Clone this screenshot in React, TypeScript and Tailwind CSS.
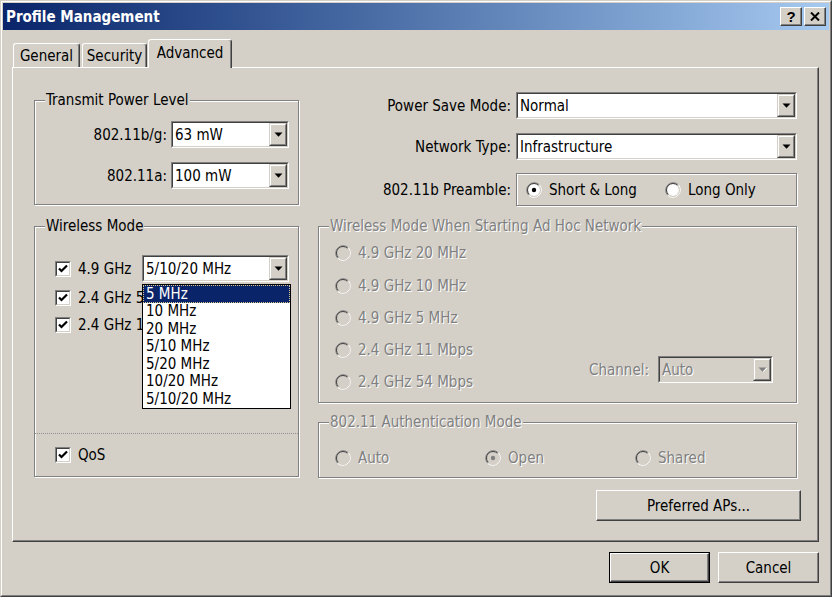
import React from "react";

const FONT = "font-['DejaVu_Sans_Condensed','DejaVu_Sans',sans-serif] [font-stretch:condensed]";
const DIS = "text-[#808080] [text-shadow:1px_1px_0_#fff]";
const ETCH = "border border-[#808080] shadow-[inset_1px_1px_0_#fff,1px_1px_0_#fff]";
const RAISED =
  "border border-t-white border-l-white border-r-[#404040] border-b-[#404040] shadow-[inset_-1px_-1px_0_#808080]";

function Check() {
  return (
    <span className="flex w-[16px] h-[16px] shrink-0 border border-t-[#808080] border-l-[#808080] border-r-white border-b-white">
      <span className="flex-1 flex items-center justify-center bg-white border border-t-[#404040] border-l-[#404040] border-r-[#d4d0c8] border-b-[#d4d0c8]">
        <svg width="12" height="12" viewBox="0 0 12 12">
          <polyline points="2,5.5 4.5,8 10,2.5" fill="none" stroke="#000" strokeWidth="2.2" />
        </svg>
      </span>
    </span>
  );
}

function Radio({ checked = false, disabled = false }: { checked?: boolean; disabled?: boolean }) {
  return (
    <svg width="16" height="16" viewBox="0 0 16 16" className="shrink-0">
      <circle cx="8" cy="8" r="6" fill={disabled ? "#d4d0c8" : "#fff"} />
      <path d="M2.7 13.3 A7.5 7.5 0 0 1 13.3 2.7" stroke="#808080" fill="none" />
      <path d="M13.3 2.7 A7.5 7.5 0 0 1 2.7 13.3" stroke="#fff" fill="none" />
      <path d="M3.4 12.6 A6.5 6.5 0 0 1 12.6 3.4" stroke="#404040" fill="none" />
      <path d="M12.6 3.4 A6.5 6.5 0 0 1 3.4 12.6" stroke="#d4d0c8" fill="none" />
      {checked && <circle cx="8" cy="8" r="2.2" fill={disabled ? "#808080" : "#000"} />}
    </svg>
  );
}

function Arrow({ disabled = false }: { disabled?: boolean }) {
  return (
    <span className="flex w-[18px] shrink-0 border border-t-[#d4d0c8] border-l-[#d4d0c8] border-r-[#404040] border-b-[#404040] bg-[#d4d0c8]">
      <span className="flex-1 flex items-center justify-center border border-t-white border-l-white border-r-[#808080] border-b-[#808080]">
        <svg width="9" height="6" viewBox="0 0 9 6">
          {disabled && <path d="M1.5 1 L9.5 1 L5.5 5 Z" fill="#fff" />}
          <path d="M0.5 0.5 L8.5 0.5 L4.5 4.8 Z" fill={disabled ? "#808080" : "#000"} />
        </svg>
      </span>
    </span>
  );
}

function Combo({ text, className, disabled = false }: { text: string; className: string; disabled?: boolean }) {
  return (
    <div
      className={`flex h-[27px] shrink-0 border border-t-[#808080] border-l-[#808080] border-r-white border-b-white ${className}`}
    >
      <div
        className={`flex-1 flex border border-t-[#404040] border-l-[#404040] border-r-[#d4d0c8] border-b-[#d4d0c8] ${
          disabled ? "bg-[#d4d0c8]" : "bg-white"
        }`}
      >
        <span className={`flex-1 flex items-center pl-[2px] whitespace-nowrap ${disabled ? DIS : ""}`}>{text}</span>
        <Arrow disabled={disabled} />
      </div>
    </div>
  );
}

function Group({
  legend,
  className,
  disabled = false,
  children,
}: {
  legend?: string;
  className: string;
  disabled?: boolean;
  children: React.ReactNode;
}) {
  return (
    <div className={`relative ${ETCH} ${className}`}>
      {legend && (
        <span
          className={`absolute left-[10px] top-[-10px] px-[1px] bg-[#d4d0c8] leading-[18px] whitespace-nowrap ${
            disabled ? DIS : ""
          }`}
        >
          {legend}
        </span>
      )}
      {children}
    </div>
  );
}

function Btn({ children, className }: { children: React.ReactNode; className: string }) {
  return <div className={`flex items-center justify-center ${RAISED} ${className}`}>{children}</div>;
}

const LIST = ["5 MHz", "10 MHz", "20 MHz", "5/10 MHz", "5/20 MHz", "10/20 MHz", "5/10/20 MHz"];

export default function App() {
  return (
    <div
      className={`w-[832px] h-[597px] overflow-hidden bg-[#d4d0c8] text-[15px] leading-[18px] text-black ${FONT} border border-t-[#d4d0c8] border-l-[#d4d0c8] border-r-[#404040] border-b-[#404040]`}
    >
      <div className="h-full flex flex-col p-[1px] border border-t-white border-l-white border-r-[#808080] border-b-[#808080]">
        {/* title bar */}
        <div className="h-[27px] shrink-0 flex items-center pl-[3px] pr-[3px] bg-gradient-to-r from-[#0a246a] to-[#a6caf0]">
          <span className="flex-1 text-white font-bold text-[15px]">Profile Management</span>
          <Btn className="w-[22px] h-[19px] bg-[#d4d0c8]">
            <span className="font-bold text-[15px] leading-none font-['Liberation_Sans',sans-serif] [font-stretch:normal]">?</span>
          </Btn>
          <Btn className="w-[22px] h-[19px] ml-[2px] bg-[#d4d0c8]">
            <svg width="10" height="9" viewBox="0 0 10 9">
              <path d="M1 0.5 L9 8.5 M9 0.5 L1 8.5" stroke="#000" strokeWidth="2" />
            </svg>
          </Btn>
        </div>

        <div className="flex-1 flex flex-col pl-[9px] pr-[10px] pt-[9px]">
          {/* tabs */}
          <div className="h-[28px] flex items-end pl-[1px]">
            <div className="h-[24px] w-[67px] flex items-center justify-center rounded-t-[3px] border-t border-l border-white border-r border-r-[#404040] shadow-[inset_-1px_0_0_#808080]">
              General
            </div>
            <div className="h-[24px] w-[65px] ml-[2px] flex items-center justify-center rounded-t-[3px] border-t border-l border-white border-r border-r-[#404040] shadow-[inset_-1px_0_0_#808080]">
              Security
            </div>
            <div className="relative z-10 h-[29px] w-[84px] ml-[1px] -mb-[1px] pb-[3px] flex items-center justify-center bg-[#d4d0c8] rounded-t-[3px] border-t border-l border-white border-r border-r-[#404040] shadow-[inset_-1px_0_0_#808080]">
              Advanced
            </div>
          </div>

          {/* panel */}
          <div className="h-[475px] flex pl-[21px] gap-[19px] border border-t-white border-l-white border-r-[#404040] border-b-[#404040] shadow-[inset_-1px_-1px_0_#808080]">
            {/* left column */}
            <div className="w-[265px] flex flex-col pt-[32px]">
              <Group legend="Transmit Power Level" className="h-[105px] flex flex-col gap-[14px] pt-[20px] pr-[9px]">
                <div className="flex items-center justify-end gap-[4px]">
                  <span>802.11b/g:</span>
                  <Combo text="63 mW" className="w-[118px]" />
                </div>
                <div className="flex items-center justify-end gap-[4px]">
                  <span>802.11a:</span>
                  <Combo text="100 mW" className="w-[118px]" />
                </div>
              </Group>

              <Group legend="Wireless Mode" className="mt-[21px] h-[251px] flex flex-col">
                <div className="pl-[20px] pt-[28px] flex flex-col">
                  <div className="h-[27px] flex items-center">
                    <div className="w-[87px] flex items-center gap-[7px]">
                      <Check />
                      <span className="whitespace-nowrap">4.9 GHz</span>
                    </div>
                    <div className="relative">
                      <Combo text="5/10/20 MHz" className="w-[147px]" />
                      <div className="absolute left-0 top-[29px] z-20 w-[149px] bg-white border border-black">
                        {LIST.map((t, i) => (
                          <div
                            key={t}
                            className={`h-[17.5px] flex items-center pl-[2px] whitespace-nowrap border ${
                              i === 0
                                ? "bg-[#0a246a] text-white border-dotted border-[#d8c890]"
                                : "border-transparent"
                            }`}
                          >
                            {t}
                          </div>
                        ))}
                      </div>
                    </div>
                  </div>
                  <div className="h-[32px] flex items-center gap-[7px]">
                    <Check />
                    <span className="w-[64px] overflow-hidden whitespace-nowrap">2.4 GHz 54 Mbps</span>
                  </div>
                  <div className="h-[22px] flex items-center gap-[7px]">
                    <Check />
                    <span className="w-[64px] overflow-hidden whitespace-nowrap">2.4 GHz 11 Mbps</span>
                  </div>
                </div>
                <div className="mt-auto border-t border-dotted border-[#909090]" />
                <div className="h-[42px] pl-[20px] flex items-center gap-[7px]">
                  <Check />
                  <span>QoS</span>
                </div>
              </Group>
            </div>

            {/* right column */}
            <div className="w-[483px] flex flex-col pt-[24px]">
              <div className="flex items-center justify-end gap-[5px] pr-[4px]">
                <span>Power Save Mode:</span>
                <Combo text="Normal" className="w-[281px]" />
              </div>
              <div className="mt-[14px] flex items-center justify-end gap-[5px] pr-[4px]">
                <span>Network Type:</span>
                <Combo text="Infrastructure" className="w-[281px]" />
              </div>
              <div className="mt-[13px] flex items-center justify-end gap-[5px] pr-[4px]">
                <span>802.11b Preamble:</span>
                <div className={`w-[281px] h-[33px] flex items-center pl-[9px] ${ETCH}`}>
                  <div className="w-[139px] flex items-center gap-[7px]">
                    <Radio checked />
                    <span>Short &amp; Long</span>
                  </div>
                  <div className="flex items-center gap-[7px]">
                    <Radio />
                    <span>Long Only</span>
                  </div>
                </div>
              </div>

              <Group legend="Wireless Mode When Starting Ad Hoc Network" disabled className="mt-[20px] w-[479px] h-[177px] flex">
                <div className="pl-[16px] pt-[9px] flex flex-col">
                  {[
                    ["4.9 GHz 20 MHz", "h-[33px]"],
                    ["4.9 GHz 10 MHz", "h-[33px]"],
                    ["4.9 GHz 5 MHz", "h-[32px]"],
                    ["2.4 GHz 11 Mbps", "h-[32px]"],
                    ["2.4 GHz 54 Mbps", "h-[32px]"],
                  ].map(([t, h]) => (
                    <div key={t} className={`${h} flex items-center gap-[7px]`}>
                      <Radio disabled />
                      <span className={`whitespace-nowrap ${DIS}`}>{t}</span>
                    </div>
                  ))}
                </div>
                <div className="flex-1 flex items-end justify-end pb-[19px] pr-[23px] gap-[9px]">
                  <span className={`h-[27px] flex items-center ${DIS}`}>Channel:</span>
                  <Combo text="Auto" className="w-[115px]" disabled />
                </div>
              </Group>

              <Group legend="802.11 Authentication Mode" disabled className="mt-[19px] w-[479px] h-[56px] pl-[16px] pt-[24px]">
                <div className="h-[22px] flex items-center">
                  <div className="w-[150px] flex items-center gap-[7px]">
                    <Radio disabled />
                    <span className={DIS}>Auto</span>
                  </div>
                  <div className="w-[150px] flex items-center gap-[7px]">
                    <Radio disabled checked />
                    <span className={DIS}>Open</span>
                  </div>
                  <div className="flex items-center gap-[7px]">
                    <Radio disabled />
                    <span className={DIS}>Shared</span>
                  </div>
                </div>
              </Group>

              <Btn className="mt-[12px] self-end w-[205px] h-[31px]">Preferred APs...</Btn>
            </div>
          </div>

          {/* bottom buttons */}
          <div className="mt-[10px] flex justify-end gap-[8px]">
            <div className="w-[101px] h-[31px] flex border border-black">
              <Btn className="flex-1">OK</Btn>
            </div>
            <Btn className="w-[101px] h-[31px]">Cancel</Btn>
          </div>
        </div>
      </div>
    </div>
  );
}
